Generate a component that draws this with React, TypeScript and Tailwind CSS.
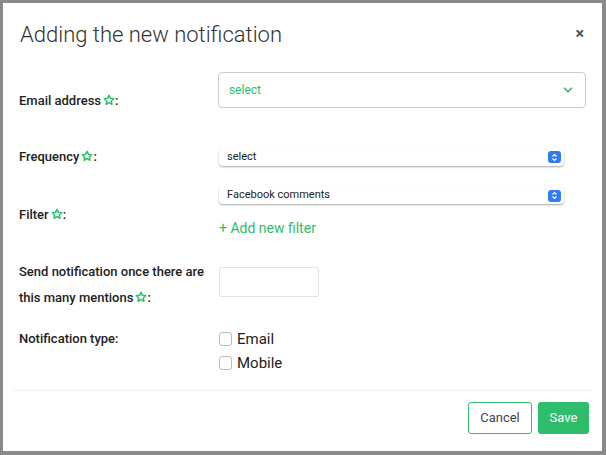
import { ChevronDown } from "lucide-react";

function Star() {
  return (
    <svg width="12" height="12" viewBox="0 0 24 24" className="inline-block align-[-1px] ml-[2px]" fill="none" stroke="#2ebd6b" strokeWidth="3" strokeLinejoin="round">
      <path d="M12 2.5l2.9 6.2 6.6.7-4.9 4.5 1.4 6.6L12 17.2l-5.9 3.3 1.4-6.6-4.9-4.5 6.6-.7z" />
    </svg>
  );
}

function NativeSelect({ text }: { text: string }) {
  return (
    <div className="w-[345px] h-[17px] rounded-[4px] bg-white shadow-[0_1px_2px_rgba(0,0,0,0.35)] flex items-center justify-between pl-[8px] pr-[3px] text-[11px] font-normal text-[#222]">
      <span>{text}</span>
      <span className="w-[13px] h-[12px] rounded-[3px] bg-[#2f7cf6] flex flex-col items-center justify-center">
        <svg width="7" height="9" viewBox="0 0 7 9" fill="none" stroke="white" strokeWidth="1.2">
          <path d="M1.5 3.5L3.5 1.5L5.5 3.5M1.5 5.5L3.5 7.5L5.5 5.5" />
        </svg>
      </span>
    </div>
  );
}

function Check({ label }: { label: string }) {
  return (
    <label className="flex items-center gap-[5px] text-[15px] text-[#222] h-[24px]">
      <span className="w-[13px] h-[14px] border border-[#bbb] rounded-[3px] bg-white" />
      {label}
    </label>
  );
}

export default function App() {
  return (
    <div className="w-[606px] h-[455px] bg-[#8a8a8a] p-[3px] pr-[4px] pb-[4px]" style={{ fontFamily: "Roboto, 'Liberation Sans', sans-serif" }}>
      <div className="h-full bg-white flex flex-col">
        {/* Header */}
        <div className="flex items-center justify-between pl-[17px] pr-[18px] pt-[6px] h-[56px]">
          <h1 className="text-[22px] font-light text-[#333]">Adding the new notification</h1>
          <span className="text-[16px] font-bold text-[#555]">×</span>
        </div>

        {/* Body */}
        <div className="flex flex-col px-[16px] text-[13px] font-medium text-[#222]">
          <div className="flex items-center h-[60px] pt-[2px]">
            <div className="w-[200px] pt-[22px]">Email address<Star />:</div>
            <div className="w-[370px] h-[36px] border border-[#ccc] rounded-[4px] flex items-center justify-between pl-[10px] pr-[10px] text-[12px] font-normal text-[#2ebd6b]">
              <span>select</span>
              <ChevronDown size={14} strokeWidth={3} color="#2ebd6b" />
            </div>
          </div>

          <div className="flex items-center h-[38px] mt-[19px]">
            <div className="w-[200px]">Frequency<Star />:</div>
            <NativeSelect text="select" />
          </div>

          <div className="flex items-center h-[70px] pt-[4px]">
            <div className="w-[200px] pt-[3px]">Filter<Star />:</div>
            <div className="flex flex-col gap-[14px]">
              <NativeSelect text="Facebook comments" />
              <span className="text-[14px] font-normal text-[#2ebd6b]">+ Add new filter</span>
            </div>
          </div>

          <div className="flex items-center h-[78px]">
            <div className="w-[200px] leading-[26px]">Send notification once there are this many mentions<Star />:</div>
            <div className="w-[100px] h-[30px] border border-[#e3e3e3] rounded-[2px] mb-[7px]" />
          </div>

          <div className="flex h-[64px] pt-[3px]">
            <div className="w-[200px] pt-[2px]">Notification type:</div>
            <div className="flex flex-col font-normal">
              <Check label="Email" />
              <Check label="Mobile" />
            </div>
          </div>
        </div>

        {/* Footer */}
        <div className="mx-[11px] border-t border-[#eee] mt-[2px] flex justify-end gap-[6px] pt-[11px] pr-[2px]">
          <button className="h-[32px] w-[64px] border border-[#2ebd6b] rounded-[3px] text-[13px] text-[#444]">Cancel</button>
          <button className="h-[32px] w-[51px] bg-[#2ebd6b] rounded-[3px] text-[13px] text-white">Save</button>
        </div>
      </div>
    </div>
  );
}
